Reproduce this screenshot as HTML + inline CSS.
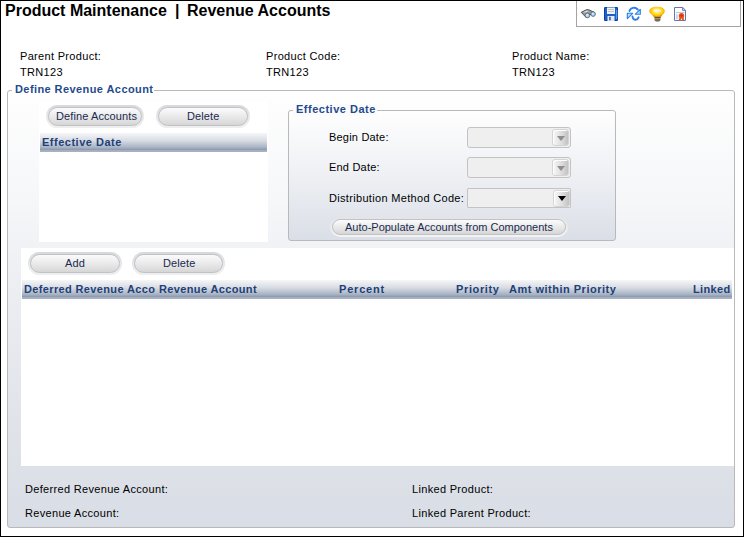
<!DOCTYPE html>
<html><head><meta charset="utf-8">
<style>
*{margin:0;padding:0;box-sizing:border-box}
html,body{width:744px;height:537px;overflow:hidden;background:#fff}
body{position:relative;font-family:"Liberation Sans",sans-serif;font-size:11px;color:#000}
.a{position:absolute;white-space:nowrap}
.frame{position:absolute;left:0;top:0;width:744px;height:537px;border:1px solid #000;z-index:50;pointer-events:none}
.title{font-weight:bold;font-size:16px;line-height:16px;color:#000}
.lbl{font-size:11px;line-height:11px;letter-spacing:0.32px;color:#000}
.bold{font-weight:bold;font-size:11px;line-height:11px;letter-spacing:0.36px;color:#213f78}
.lg{color:#1f4a8e}
.toolbar{position:absolute;left:576px;top:0;width:165px;height:27px;border:1px solid #a4a4a4;background:#fff}
.fs{position:absolute;border:1px solid #b9b9b9;border-radius:3px}
.leg{position:absolute;padding:0 2px;}
.panel{position:absolute;background:#fff}
.hdr{position:absolute;height:19px;background:linear-gradient(#f5f6f8 0%,#d8dce3 40%,#a9b4c4 75%,#8a98ae 89%,#a3adbe 90%,#a9b3c3 100%)}
.btn{position:absolute;border-radius:12px;background:linear-gradient(#d6d8dc,#e6e7e9 50%,#efefef);padding:2px}
.btn>div{width:100%;height:100%;border:1px solid #bfc2c7;border-radius:10px;background:linear-gradient(#fbfbfb,#efefef 35%,#e2e2e2 70%,#d6d6d6);}
.btxt{color:#1a2a50;font-size:11px;line-height:11px;letter-spacing:0.1px}
.combo{position:absolute;width:104px;height:21px;border:1px solid #c3c3c3;border-radius:3px;background:#efefef}
.cbtn{position:absolute;right:1px;top:1px;width:17px;height:17px;border-radius:3px;border:1px solid #d4d4d4;box-shadow:inset 1px 1px 0 #fff;background:linear-gradient(90deg,#f7f7f7,#dedede 55%,#c2c2c2)}
.arr{position:absolute;left:4px;top:6px;width:0;height:0;border-left:4px solid transparent;border-right:4px solid transparent;border-top:5px solid #8e8e8e}
</style></head><body>
<div class="frame"></div>

<!-- title -->
<div class="a title" style="left:5px;top:3px">Product Maintenance</div>
<div class="a title" style="left:175px;top:3px">|</div>
<div class="a title" style="left:187px;top:3px">Revenue Accounts</div>

<!-- toolbar -->
<div class="toolbar"></div>
<svg class="a" style="left:576px;top:0" width="165" height="27" viewBox="576 0 165 27">
<!-- binoculars -->
<g>
<path d="M581.2 12.3 L586.8 9.6 L589.5 10 L594.5 12.5 L594 14.5 L589.5 14.5 L587.5 16.8 L585.5 16.8 Z" fill="#9a9a9a" stroke="#444" stroke-width="0.9" stroke-linejoin="round"/>
<path d="M583 12.3 L587 10.6 L589 11 L585.5 12.6 Z" fill="#e2e2e2"/>
<circle cx="587.4" cy="15.4" r="2.4" fill="#a8d0f8" stroke="#5a6470" stroke-width="0.9"/>
<circle cx="593.1" cy="14.1" r="2.3" fill="#a8d0f8" stroke="#5a6470" stroke-width="0.9"/>
<circle cx="587" cy="14.9" r="0.9" fill="#eaf4ff"/>
<circle cx="592.7" cy="13.6" r="0.9" fill="#eaf4ff"/>
</g>
<!-- floppy -->
<g>
<rect x="604" y="7" width="14" height="14" rx="1.2" fill="#1d5fcc"/>
<rect x="604.5" y="7.5" width="13" height="13" rx="1" fill="none" stroke="#0a3fa0" stroke-width="1"/>
<rect x="607" y="7.5" width="8" height="6.5" fill="#f2f2f2"/>
<line x1="608" y1="9.5" x2="614" y2="9.5" stroke="#b8b8b8" stroke-width="0.8"/>
<line x1="608" y1="11.5" x2="614" y2="11.5" stroke="#b8b8b8" stroke-width="0.8"/>
<rect x="607.5" y="16" width="7" height="5" fill="#e8e8e8"/>
<rect x="609" y="16.8" width="1.8" height="3.5" fill="#2c6fd6"/>
<rect x="616" y="10" width="1.3" height="9" fill="#5b9cf0"/>
</g>
<!-- refresh -->
<g fill="none" stroke="#2a7ee6" stroke-linecap="round">
<path d="M629.5 11 C630.5 7.5 635 6.5 637.8 9.5" stroke-width="1.9"/>
<path d="M632.5 16.5 C633 20.5 637 21 638.6 17.3" stroke-width="1.9"/>
</g>
<path d="M640.3 9.3 L640.3 14.2 L635.3 14.2 Z" fill="#bfe0ff" stroke="#2a7ee6" stroke-width="1.1" stroke-linejoin="round"/>
<path d="M627.3 18.7 L627.3 13.3 L632.7 13.3 Z" fill="#bfe0ff" stroke="#2a7ee6" stroke-width="1.1" stroke-linejoin="round"/>
<!-- bulb -->
<defs>
<radialGradient id="bg" cx="0.5" cy="0.4" r="0.6">
<stop offset="0" stop-color="#fffde8"/><stop offset="0.3" stop-color="#fff04a"/><stop offset="0.7" stop-color="#ffc400"/><stop offset="1" stop-color="#e07a00"/>
</radialGradient>
</defs>
<path d="M649.3 11 C649.3 5.3 664.7 5.3 664.7 11 C664.7 13.8 661.5 15 660.8 17.5 L654.2 17.5 C653.5 15 649.3 13.8 649.3 11 Z" fill="url(#bg)"/>
<path d="M652 14.5 C654 16 656 16.5 657 16.5 C658 16.5 660 16 662 14.5 L661 17.3 L654 17.3 Z" fill="#e08a10" opacity="0.7"/>
<ellipse cx="657" cy="10.6" rx="4" ry="1.3" fill="#f0eeff" opacity="0.95"/>
<path d="M654.5 17 L660.5 17 L660.3 20.5 C660 21.8 655 21.8 654.7 20.5 Z" fill="#5e5040"/>
<rect x="655" y="18" width="5" height="0.8" fill="#b8a888"/>
<rect x="655" y="19.6" width="5" height="0.8" fill="#a89878"/>
<!-- doc -->
<path d="M674.5 7.5 L682.8 7.5 L685.5 10.2 L685.5 20.5 L674.5 20.5 Z" fill="#fdfdfd" stroke="#6478a8" stroke-width="1"/>
<path d="M682.5 7.8 L682.5 10.5 L685.2 10.5 Z" fill="#d8e0f2" stroke="#6478a8" stroke-width="0.8"/>
<line x1="676" y1="12.5" x2="684.5" y2="12.5" stroke="#a8b8dc" stroke-width="0.8"/>
<rect x="676" y="14.2" width="1.8" height="5" fill="#c9d3ea"/>
<path d="M679.8 17 L678.6 20.6 L680.6 20 L681.5 18 Z" fill="#e84a18"/>
<path d="M683.2 17 L684.4 20.6 L682.4 20 L681.5 18 Z" fill="#e84a18"/>
<circle cx="681.5" cy="15.8" r="2.7" fill="#f0501c"/>
<circle cx="681.5" cy="15.6" r="1.1" fill="#c0300a"/>
</svg>


<!-- product info -->
<div class="a lbl" style="left:20px;top:51px">Parent Product:</div>
<div class="a lbl" style="left:20px;top:67px">TRN123</div>
<div class="a lbl" style="left:266px;top:51px">Product Code:</div>
<div class="a lbl" style="left:266px;top:67px">TRN123</div>
<div class="a lbl" style="left:512px;top:51px">Product Name:</div>
<div class="a lbl" style="left:512px;top:67px">TRN123</div>

<!-- outer fieldset -->
<div class="fs" style="left:7px;top:90px;width:728px;height:438px;background:linear-gradient(#fefefe 0%,#f6f7f9 25%,#eceef2 45%,#e2e5eb 70%,#d9dde5 100%)"></div>
<div class="a bold lg" style="letter-spacing:0.42px;left:12px;top:84px;background:#fff;padding:0 1px 0 3px;height:12px">Define Revenue Account</div>

<!-- top left panel -->
<div class="panel" style="left:39px;top:101px;width:229px;height:141px"></div>
<div class="btn" style="left:46px;top:105px;width:98px;height:23px"><div></div></div>
<div class="a btxt" style="left:56px;top:111px">Define Accounts</div>
<div class="btn" style="left:156px;top:105px;width:94px;height:23px"><div></div></div>
<div class="a btxt" style="left:187px;top:111px">Delete</div>
<div class="hdr" style="left:40px;top:133px;width:227px"></div>
<div class="a bold" style="left:42px;top:137px;letter-spacing:0.51px">Effective Date</div>

<!-- inner fieldset -->
<div class="fs" style="left:288px;top:110px;width:328px;height:131px;background:linear-gradient(#fefefe 0%,#eef0f4 50%,#dadee6 100%)"></div>
<div class="a bold lg" style="letter-spacing:0.51px;left:293px;top:104px;background:#fbfbfc;padding:0 1px 0 3px;height:12px">Effective Date</div>
<div class="a lbl" style="left:329px;top:132px;letter-spacing:0.2px">Begin Date:</div>
<div class="a lbl" style="left:329px;top:162px;letter-spacing:0.2px">End Date:</div>
<div class="a lbl" style="left:329px;top:193px">Distribution Method Code:</div>
<div class="combo" style="left:467px;top:127px"><div class="cbtn"><div class="arr"></div></div></div>
<div class="combo" style="left:467px;top:157px"><div class="cbtn"><div class="arr"></div></div></div>
<div class="combo" style="left:467px;top:188px;height:20px;border-radius:1px"><div class="cbtn" style="height:17px;right:0;width:17px"><div class="arr" style="border-top-color:#000;top:5px;left:3.5px;border-left-width:4.5px;border-right-width:4.5px"></div></div></div>
<div class="btn" style="left:330px;top:217px;width:238px;height:20px;border-radius:10px;background:linear-gradient(#e3e4e7,#f3f3f4)"><div style="border-radius:8px"></div></div>
<div class="a btxt" style="left:345px;top:222px;letter-spacing:0">Auto-Populate Accounts from Components</div>

<!-- bottom panel -->
<div class="panel" style="left:21px;top:248px;width:713px;height:218px"></div>
<div class="btn" style="left:28px;top:252px;width:94px;height:23px"><div></div></div>
<div class="a btxt" style="left:65px;top:258px">Add</div>
<div class="btn" style="left:132px;top:252px;width:93px;height:23px"><div></div></div>
<div class="a btxt" style="left:163px;top:258px">Delete</div>
<div class="hdr" style="left:22px;top:280px;width:710px"></div>
<div class="a bold" style="left:24px;top:284px">Deferred Revenue Acco</div>
<div class="a bold" style="left:159px;top:284px">Revenue Account</div>
<div class="a bold" style="left:339px;top:284px;letter-spacing:0.8px">Percent</div>
<div class="a bold" style="left:456px;top:284px;letter-spacing:0.64px">Priority</div>
<div class="a bold" style="left:509px;top:284px;letter-spacing:0.5px">Amt within Priority</div>
<div class="a bold" style="left:693px;top:284px">Linked</div>

<!-- bottom labels -->
<div class="a lbl" style="left:25px;top:484px">Deferred Revenue Account:</div>
<div class="a lbl" style="left:25px;top:508px">Revenue Account:</div>
<div class="a lbl" style="left:412px;top:484px">Linked Product:</div>
<div class="a lbl" style="left:412px;top:508px">Linked Parent Product:</div>

</body></html>
